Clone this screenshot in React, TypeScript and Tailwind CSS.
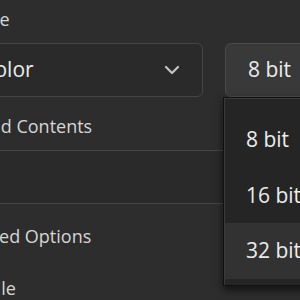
import React from "react";

export default function App() {
  const font = { fontFamily: "'Open Sans', 'Noto Sans', sans-serif" };
  return (
    <div
      className="relative w-[300px] h-[300px] overflow-hidden bg-[#2d2d2d] text-[#d6d6d6]"
      style={font}
    >
      <div className="flex flex-col">
        <div className="mt-[7px] ml-[-88px] h-[24px] text-[18px] leading-[24px] whitespace-nowrap">
          Color Mode
        </div>
        <div className="mt-[12px] flex flex-row items-center">
          <div className="ml-[-80px] w-[283px] h-[54px] shrink-0 rounded-[6px] border border-[#454545] bg-[#2a2a2a] flex items-center justify-between pl-[13px] pr-[21px]">
            <span className="text-[21px] text-[#ececec] whitespace-nowrap">RGB Color</span>
            <svg width="18" height="12" viewBox="0 0 18 12" fill="none">
              <path
                d="M3 3 L9 9 L15 3"
                stroke="#c4c4c4"
                strokeWidth="2.2"
                strokeLinecap="round"
                strokeLinejoin="round"
              />
            </svg>
          </div>
          <div className="ml-[22px] w-[100px] h-[54px] shrink-0 rounded-[6px] border border-[#4a4a4a] bg-[#393939] flex items-center pl-[22px]">
            <span className="text-[21px] text-[#ececec] whitespace-nowrap">8 bit</span>
          </div>
        </div>
        <div className="mt-[17px] ml-[-89px] h-[24px] text-[18px] leading-[24px] whitespace-nowrap">
          Background Contents
        </div>
        <div className="mt-[12px] ml-[-80px] w-[420px] h-[54px] rounded-[6px] border border-[#454545] bg-[#2a2a2a]" />
        <div className="mt-[20px] ml-[-62px] h-[24px] text-[18px] leading-[24px] whitespace-nowrap">
          Advanced Options
        </div>
        <div className="mt-[28px] ml-[-88px] h-[24px] text-[18px] leading-[24px] whitespace-nowrap">
          Color Profile
        </div>
      </div>

      <div className="absolute left-[223px] top-[97px] w-[110px] h-[189px] border border-[#111111] bg-[#252525] shadow-[0_4px_8px_rgba(0,0,0,0.6)]">
        <div className="h-full border-l border-t border-[#3a3a3a] flex flex-col pt-[13px] pb-[6px]">
          <div className="h-[56px] flex items-center pl-[21px] text-[21px] text-[#ececec]">8 bit</div>
          <div className="h-[56px] flex items-center pl-[21px] text-[21px] text-[#ececec]">16 bit</div>
          <div className="h-[56px] flex items-center pl-[21px] text-[21px] text-[#ececec] bg-[#323232]">32 bit</div>
        </div>
      </div>
    </div>
  );
}
